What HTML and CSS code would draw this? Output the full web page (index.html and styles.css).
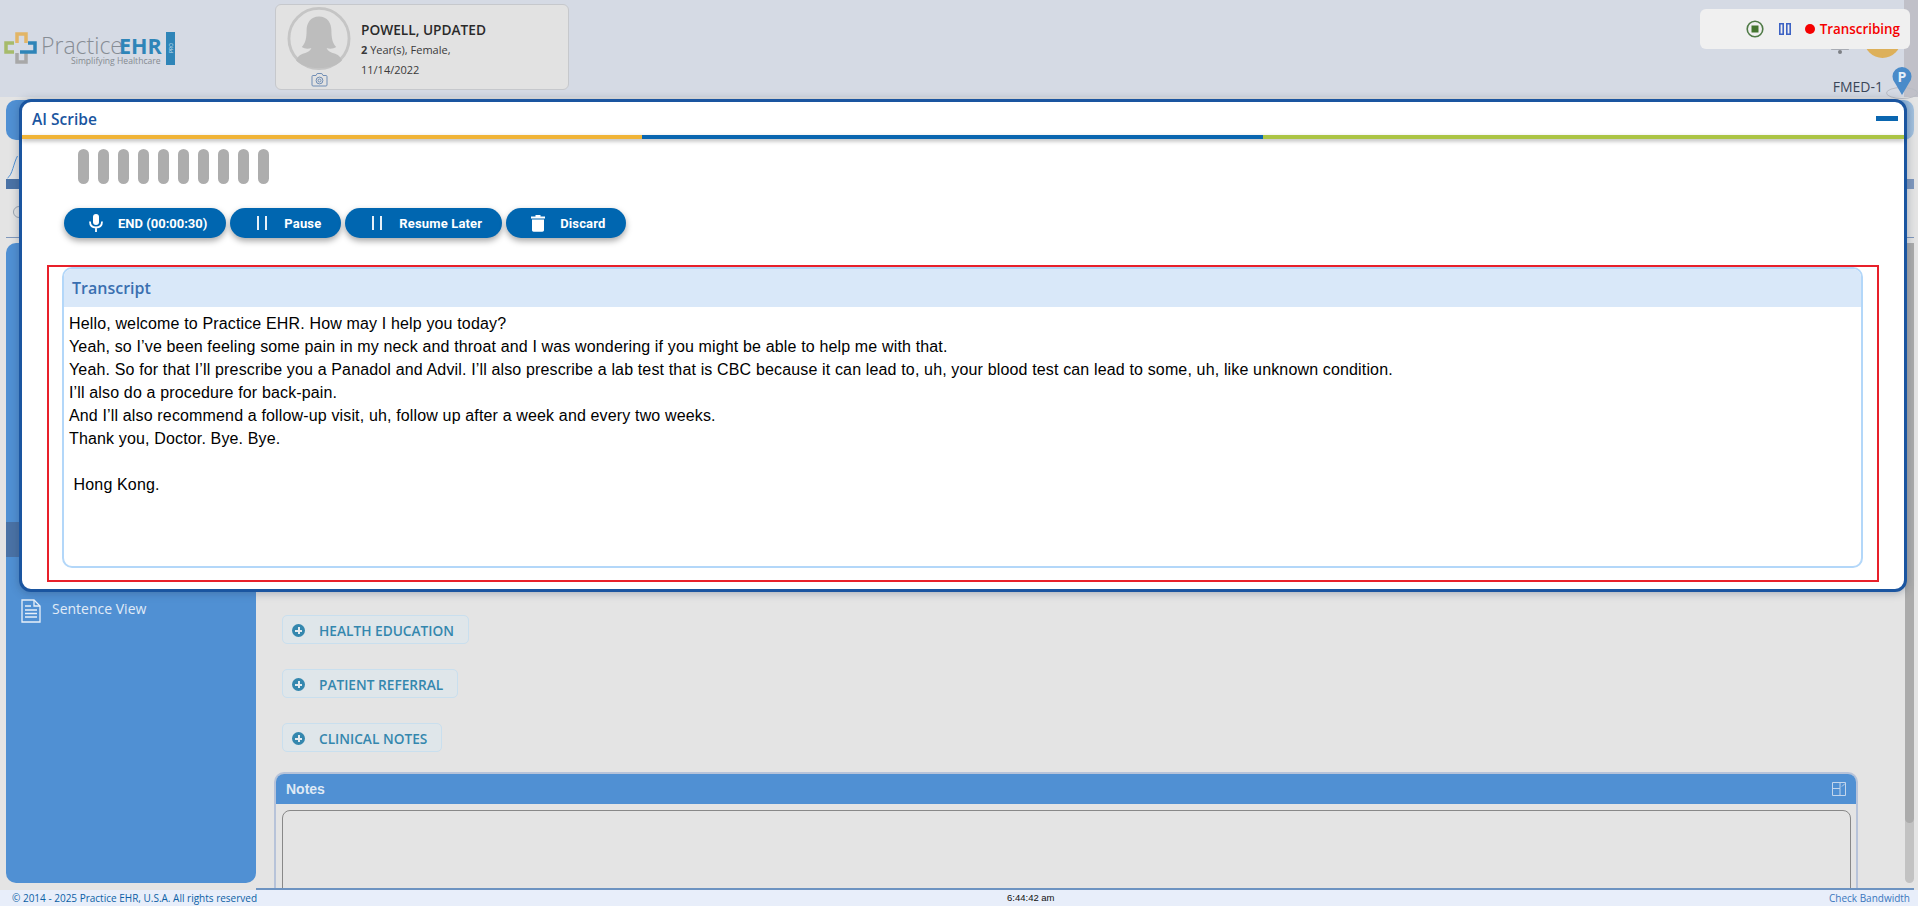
FILE: index.html
```html
<!DOCTYPE html>
<html lang="en">
<head>
<meta charset="utf-8">
<title>AI Scribe - Practice EHR</title>
<link rel="stylesheet" href="styles.css">
</head>
<body>
<div class="app">
  <header class="topbar">
    <svg class="logo" width="180" height="44" viewBox="0 0 180 44">
      <path class="lg-orange" d="M17 17V8H26V17"/>
      <path class="lg-green" d="M14 17H6V26H14"/>
      <path class="lg-gray" d="M17 27V36H26V27"/>
      <path class="lg-blue" d="M20 26H35V17H28"/>
      <text class="lg-practice" x="41" y="28">Practice</text>
      <text class="lg-ehr" x="119" y="28">EHR</text>
      <text class="lg-tag" x="71" y="38">Simplifying Healthcare</text>
      <rect class="lg-flag" x="166" y="6" width="9" height="33"/>
      <text class="lg-pro" transform="translate(172.5 27) rotate(-90)">PRO</text>
    </svg>
    <section class="patient">
      <div class="patient-photo">
        <svg width="66" height="66" viewBox="0 0 66 66">
          <ellipse class="ph-ring" cx="33" cy="33" rx="31.5" ry="31.5"/>
          <path class="ph-person" d="M33 10c-9 0-13 7-13 15 0 7-1 13-5 17 3 2 7 2 10 1-1 3-4 5-9 6-5 2-6 5-7 7 5 5 13 8 24 8s19-3 24-8c-1-2-2-5-7-7-5-1-8-3-9-6 3 1 7 1 10-1-4-4-5-10-5-17 0-8-4-15-13-15z"/>
        </svg>
        <svg class="camera" width="17" height="15" viewBox="0 0 17 15">
          <path d="M1 4.5c0-.6.4-1 1-1h3L6.200 1.500h4.600L12 3.500h3c.6 0 1 .4 1 1v8.500c0 .6-.4 1-1 1H2c-.6 0-1-.4-1-1z"/>
          <circle cx="8.500" cy="8.500" r="3.400"/>
          <circle cx="8.500" cy="8.500" r="1.500"/>
        </svg>
      </div>
      <div class="patient-info">
        <div class="patient-name">POWELL, UPDATED</div>
        <div class="patient-line"><b>2</b> Year(s), Female,</div>
        <div class="patient-line">11/14/2022</div>
      </div>
    </section>
    <div class="user-area">
      <div class="user-row">
        <svg class="bell" width="20" height="34" viewBox="0 0 20 34">
          <path d="M4 24h12l3 4.500H1z"/>
          <rect x="8" y="29" width="4" height="4" rx="2"/>
        </svg>
        <div class="user-avatar"></div>
      </div>
      <div class="facility">FMED-1</div>
    </div>
    <div class="top-strip"></div>
    <svg class="pin" width="32" height="36" viewBox="0 0 32 36">
      <ellipse class="pin-ring" cx="16" cy="27" rx="15.500" ry="5.500"/>
      <path class="pin-body" d="M16 29 9 17A9.500 9.500 0 1 1 23 17z"/>
      <text class="pin-p" x="16" y="15.500">P</text>
    </svg>
  </header>

  <div class="nav-bar"></div>
  <div class="tool-strip">
    <div class="tool-left">
      <svg width="10" height="24" viewBox="0 0 10 24"><path class="tool-curve" d="M0 23C5 20 6 8 10 1"/></svg>
      <div class="tool-block"></div>
      <div class="tool-dot"></div>
    </div>
    <div class="tool-right">
      <div class="tool-block"></div>
    </div>
  </div>
  <div class="rule"></div>

  <main class="workspace">
    <aside class="sidebar">
      <div class="side-active"></div>
      <div class="side-item">
        <svg width="20" height="24" viewBox="0 0 20 24">
          <path class="doc" d="M1 1h12l6 6v16H1z"/>
          <path class="doc" d="M13 1v6h6"/>
          <path class="doc" d="M4 7h6M4 11h12M4 14.500h12M4 18h12"/>
        </svg>
        <span>Sentence View</span>
      </div>
    </aside>
    <div class="content-wrap">
      <div class="content">
        <button class="add-btn"><span class="plus"></span>HEALTH EDUCATION</button>
        <button class="add-btn"><span class="plus"></span>PATIENT REFERRAL</button>
        <button class="add-btn"><span class="plus"></span>CLINICAL NOTES</button>
        <section class="notes">
          <div class="notes-head">
            <span>Notes</span>
            <svg width="14" height="14" viewBox="0 0 14 14">
              <path class="expand" d="M.500.500h13v13H.500zM.500 6.500h7.500v7M8 .500v6M10 4.500l3-3"/>
            </svg>
          </div>
          <div class="notes-box"></div>
        </section>
      </div>
      <div class="scroll-track"><div class="scroll-thumb"></div></div>
    </div>
  </main>

  <footer class="footer">
    <span class="foot-copy">© 2014 - 2025 Practice EHR, U.S.A. All rights reserved</span>
    <span class="foot-time">6:44:42 am</span>
    <span class="foot-link">Check Bandwidth</span>
  </footer>
</div>

<div class="status-panel">
  <svg width="18" height="18" viewBox="0 0 18 18">
    <circle class="stop-ring" cx="9" cy="9" r="7.800"/>
    <rect class="stop-core" x="5.500" y="5.500" width="7" height="7"/>
  </svg>
  <svg class="pause-blue" width="12" height="12" viewBox="0 0 12 12">
    <path d="M.800.800h3.400v10.400H.800zM7.800.800h3.400v10.400H7.800z"/>
  </svg>
  <span class="rec-dot"></span>
  <span class="rec-label">Transcribing</span>
</div>

<section class="modal">
  <div class="modal-head">
    <span class="modal-title">AI Scribe</span>
    <span class="minimize"></span>
  </div>
  <div class="tricolor"><i class="tc-y"></i><i class="tc-b"></i><i class="tc-g"></i></div>
  <div class="bars">
    <i></i><i></i><i></i><i></i><i></i><i></i><i></i><i></i><i></i><i></i>
  </div>
  <div class="actions">
    <button class="act act-end">
      <svg width="16" height="20" viewBox="0 0 16 20">
        <rect class="mic-fill" x="5" y="1" width="6" height="11" rx="3"/>
        <path class="mic-line" d="M2 8.500c0 4 2.500 6 6 6s6-2 6-6M8 14.500V19"/>
      </svg>
      END (00:00:30)
    </button>
    <button class="act">
      <svg width="16" height="16" viewBox="0 0 16 16"><path class="mic-line" d="M4 1v14M12 1v14"/></svg>
      Pause
    </button>
    <button class="act">
      <svg width="16" height="16" viewBox="0 0 16 16"><path class="mic-line" d="M4 1v14M12 1v14"/></svg>
      Resume Later
    </button>
    <button class="act act-discard">
      <svg width="16" height="18" viewBox="0 0 16 18">
        <path class="mic-fill" d="M1 2.500h4.500V1h5v1.500H15v2H1zM2 5.500h12V16c0 1-.6 1.700-1.700 1.700H3.700C2.600 17.700 2 17 2 16z"/>
      </svg>
      Discard
    </button>
  </div>
  <div class="red-frame">
    <div class="transcript">
      <div class="transcript-head">Transcript</div>
      <div class="transcript-body">
        <p>Hello, welcome to Practice EHR. How may I help you today?</p>
        <p>Yeah, so I’ve been feeling some pain in my neck and throat and I was wondering if you might be able to help me with that.</p>
        <p>Yeah. So for that I’ll prescribe you a Panadol and Advil. I’ll also prescribe a lab test that is CBC because it can lead to, uh, your blood test can lead to some, uh, like unknown condition.</p>
        <p>I’ll also do a procedure for back-pain.</p>
        <p>And I’ll also recommend a follow-up visit, uh, follow up after a week and every two weeks.</p>
        <p>Thank you, Doctor. Bye. Bye.</p>
        <p>&nbsp;</p>
        <p>&nbsp;Hong Kong.</p>
      </div>
    </div>
  </div>
</section>
</body>
</html>
```

FILE: styles.css
```css
* { box-sizing: border-box; }
html, body { margin: 0; padding: 0; }
body {
  width: 1918px;
  height: 906px;
  overflow: hidden;
  position: relative;
  background: #e4e4e4;
  font-family: "Open Sans", "Noto Sans", sans-serif;
  color: #222;
}
.app { display: flex; flex-direction: column; height: 906px; }

/* top bar */
.topbar {
  position: relative;
  display: flex;
  height: 97px;
  background: #d5dae4;
  flex: none;
}
.logo { margin-top: 26px; flex: none; }
.lg-orange, .lg-green, .lg-gray, .lg-blue { fill: none; stroke-width: 3.500; }
.lg-orange { stroke: #e2b566; }
.lg-green { stroke: #a6bb6b; }
.lg-gray { stroke: #a8a8a8; }
.lg-blue { stroke: #2f85b8; }
.lg-practice { font-family: "Open Sans", sans-serif; font-weight: 300; font-size: 23px; fill: #878d95; }
.lg-ehr { font-family: "Open Sans", sans-serif; font-weight: 700; font-size: 21.500px; fill: #2f85b8; }
.lg-tag { font-family: "Open Sans", sans-serif; font-size: 8.600px; fill: #858a90; }
.lg-flag { fill: #2f85b8; }
.lg-pro { font-family: "Open Sans", sans-serif; font-size: 5px; fill: #cfe3f0; }

.patient {
  display: flex;
  gap: 9px;
  width: 294px;
  height: 86px;
  margin: 4px 0 0 95px;
  padding: 2px 10px;
  background: #e2e2e2;
  border: 1px solid #c6c8cc;
  border-radius: 6px;
  flex: none;
}
.patient-photo { display: flex; flex-direction: column; align-items: center; gap: 2px; width: 66px; }
.ph-ring { fill: #e2e2e2; stroke: #c5c5c5; stroke-width: 3; }
.ph-person { fill: #bdbdbd; }
.camera { fill: none; stroke: #6f8db5; stroke-width: 1; flex: none; }
.patient-info { margin-top: 13px; }
.patient-name { font-size: 13.700px; font-weight: 600; line-height: 20px; color: #2a2a2a; }
.patient-line { font-size: 11px; line-height: 20px; color: #3a3a3a; }
.patient-line b { font-weight: 700; }

.user-area {
  display: flex;
  flex-direction: column;
  align-items: flex-end;
  margin-left: auto;
  padding: 21px 3px 0 0;
  flex: none;
}
.user-row { display: flex; align-items: flex-start; gap: 14px; height: 38px; }
.bell { fill: #7c7f85; }
.user-avatar { width: 37px; height: 37px; border-radius: 50%; background: #ddb05a; }
.facility { margin: 18px 18px 0 0; font-size: 14px; line-height: 20px; color: #3b4658; }
.top-strip { width: 14px; background: #c0c0c8; flex: none; }
.pin { position: absolute; left: 1886px; top: 66px; }
.pin-ring { fill: none; stroke: #b9bcc4; stroke-width: 1; }
.pin-body { fill: #4a8bc9; }
.pin-p { font-family: "Open Sans", sans-serif; font-weight: 700; font-size: 14px; fill: #e6f0fa; text-anchor: middle; }

/* stubs behind the dialog */
.nav-bar {
  flex: none;
  height: 40px;
  margin: 3px 4px 0 6px;
  border-radius: 10px;
  background: linear-gradient(90deg, #5090d3, #5090d3 98%, #a4c0dc);
}
.tool-strip { flex: none; display: flex; justify-content: space-between; height: 97px; padding: 15px 4px 0 6px; }
.tool-left { width: 13px; }
.tool-left svg { display: block; width: 13px; }
.tool-curve { fill: none; stroke: #5090d3; stroke-width: 1; }
.tool-block { width: 13px; height: 10px; background: #4a72a5; }
.tool-right { width: 7px; padding-top: 24px; }
.tool-right .tool-block { width: 7px; background: #7e97bd; }
.tool-dot { width: 12px; height: 12px; margin: 17px 0 0 7px; border: 1px solid #9aa4b0; border-radius: 50%; }
.rule { flex: none; height: 1px; margin: 0 4px 0 6px; background: #7f97bb; }

/* workspace */
.workspace { display: flex; height: 652px; flex: none; padding-top: 5px; padding-right: 4px; }
.sidebar {
  width: 250px;
  height: 640px;
  margin-left: 6px;
  flex: none;
  background: #5090d3;
  border-radius: 10px;
}
.side-active { width: 13px; height: 35px; margin-top: 279px; background: #4a72a5; }
.side-item {
  display: flex;
  gap: 11px;
  margin: 42px 0 0 15px;
  font-size: 14px;
  line-height: 20px;
  color: #e0ebf7;
}
.doc { fill: none; stroke: #e8f0f9; stroke-width: 1.300; }
.content-wrap { display: flex; flex: 1; min-width: 0; height: 647px; border-bottom: 2px solid #6d93c1; }
.content {
  flex: 1;
  min-width: 0;
  overflow: hidden;
  padding: 372px 47px 0 18px;
  display: flex;
  flex-direction: column;
  align-items: flex-start;
}
.add-btn {
  display: flex;
  align-items: center;
  gap: 14px;
  height: 29px;
  margin: 0 0 25px 8px;
  padding: 2px 14px 0 9px;
  background: #dfe6ea;
  border: 1px solid #c9dfee;
  border-radius: 5px;
  font-family: "Open Sans", sans-serif;
  font-size: 13.700px;
  font-weight: 600;
  color: #3487ae;
  flex: none;
}
.plus {
  position: relative;
  width: 13px;
  height: 13px;
  border-radius: 50%;
  background: #3487ae;
  flex: none;
}
.plus::before, .plus::after { content: ""; position: absolute; background: #e4eaee; }
.plus::before { left: 3px; right: 3px; top: 5.500px; height: 2px; }
.plus::after { top: 3px; bottom: 3px; left: 5.500px; width: 2px; }
.notes {
  align-self: stretch;
  flex: none;
  height: 130px;
  margin-top: -5px;
  border: 2px solid #b7c3d9;
  border-bottom: 0;
  border-radius: 10px 10px 0 0;
}
.notes-head {
  display: flex;
  justify-content: space-between;
  align-items: center;
  height: 30px;
  padding: 0 10px;
  background: #5090d3;
  border-radius: 8px 8px 0 0;
  font-family: "Liberation Sans", Arial, sans-serif;
  font-size: 14px;
  font-weight: 700;
  color: #dfe9f5;
}
.expand { fill: none; stroke: #c3d6ec; stroke-width: 1; }
.notes-box {
  height: 120px;
  margin: 6px 5px 0 6px;
  border: 1px solid #888;
  border-radius: 8px;
}
.scroll-track {
  width: 9px;
  height: 640px;
  flex: none;
  background: #c2c2c2;
  border-radius: 0 0 5px 5px;
}
.scroll-thumb { height: 580px; background: #ababab; border-radius: 0 0 5px 5px; }

/* footer */
.footer {
  flex: 1;
  display: grid;
  grid-template-columns: 995px 46px 1fr;
  align-items: end;
  padding: 0 8px 0 12px;
  background: #e8eefa;
  overflow: hidden;
}
.foot-copy { font-size: 10px; line-height: 16px; color: #0b5fa5; white-space: nowrap; }
.foot-time { font-family: "Liberation Sans", Arial, sans-serif; font-size: 9.500px; line-height: 16px; color: #111; white-space: nowrap; }
.foot-link { font-size: 10px; line-height: 16px; color: #3a76bd; text-align: right; }

/* floating status panel */
.status-panel {
  position: absolute;
  left: 1700px;
  top: 9px;
  width: 210px;
  height: 40px;
  display: flex;
  align-items: center;
  justify-content: flex-end;
  padding-right: 10px;
  background: #f0f0f0;
  border-radius: 6px;
}
.stop-ring { fill: none; stroke: #4f7a46; stroke-width: 1.600; }
.stop-core { fill: #44752f; }
.pause-blue { margin-left: 15px; fill: #f0f0f0; stroke: #3c62c4; stroke-width: 1.600; }
.rec-dot { width: 10px; height: 10px; margin: 0 5px 0 14px; border-radius: 50%; background: #f50000; }
.rec-label { font-size: 13.400px; font-weight: 600; color: #f50000; }

/* dialog */
.modal {
  position: absolute;
  left: 19px;
  top: 99px;
  width: 1888px;
  height: 493px;
  display: flex;
  flex-direction: column;
  background: #fff;
  border: 3px solid #1a55a0;
  border-radius: 12px;
  box-shadow: 0 1px 8px rgba(40, 60, 90, .35);
}
.modal-head {
  flex: none;
  display: flex;
  align-items: center;
  justify-content: space-between;
  height: 33px;
  padding: 0 6px 0 10px;
}
.modal-title { font-size: 15.500px; font-weight: 600; color: #1a55a0; }
.minimize { width: 22px; height: 5px; background: #0a66b0; }
.tricolor { flex: none; display: flex; height: 4px; box-shadow: 0 2px 4px rgba(0, 0, 0, .3); }
.tc-y { width: 620px; background: #f0b437; }
.tc-b { width: 621px; background: #0a66b0; }
.tc-g { flex: 1; background: #abc444; }
.bars { flex: none; display: flex; gap: 8.600px; height: 35px; margin-top: 10px; padding-left: 56px; }
.bars i { width: 11.400px; background: #adadad; border-radius: 6px; }
.actions { flex: none; display: flex; gap: 4px; height: 30px; margin-top: 24px; padding-left: 42px; }
.act {
  display: flex;
  align-items: center;
  gap: 14px;
  height: 30px;
  padding: 0 20px 0 24px;
  border: 0;
  border-radius: 15px;
  background: #0066b0;
  box-shadow: 0 3px 6px rgba(0, 0, 0, .35);
  font-family: "Roboto", sans-serif;
  font-size: 13px;
  font-weight: 700;
  letter-spacing: .15px;
  color: #fff;
  white-space: nowrap;
}
.act-end { letter-spacing: 0; padding-right: 19px; }
.act-discard { padding-right: 21px; }
.mic-fill { fill: #fff; }
.mic-line { fill: none; stroke: #fff; stroke-width: 1.800; }
.red-frame {
  flex: none;
  height: 317px;
  margin: 27px 25px 0 25px;
  padding: 0 14px 0 13px;
  border: 2px solid #e8202a;
}
.transcript {
  height: 301px;
  background: #fff;
  border: 2px solid #b3d7f9;
  border-radius: 10px;
  overflow: hidden;
}
.transcript-head {
  height: 38px;
  padding-left: 8px;
  background: #d9e8f9;
  font-size: 16px;
  font-weight: 600;
  line-height: 38px;
  color: #3a6fb0;
}
.transcript-body {
  padding: 5px 0 0 5px;
  font-family: "Liberation Sans", Arial, sans-serif;
  font-size: 16px;
  line-height: 23px;
  letter-spacing: .15px;
  color: #000;
}
.transcript-body p { margin: 0; }
```
